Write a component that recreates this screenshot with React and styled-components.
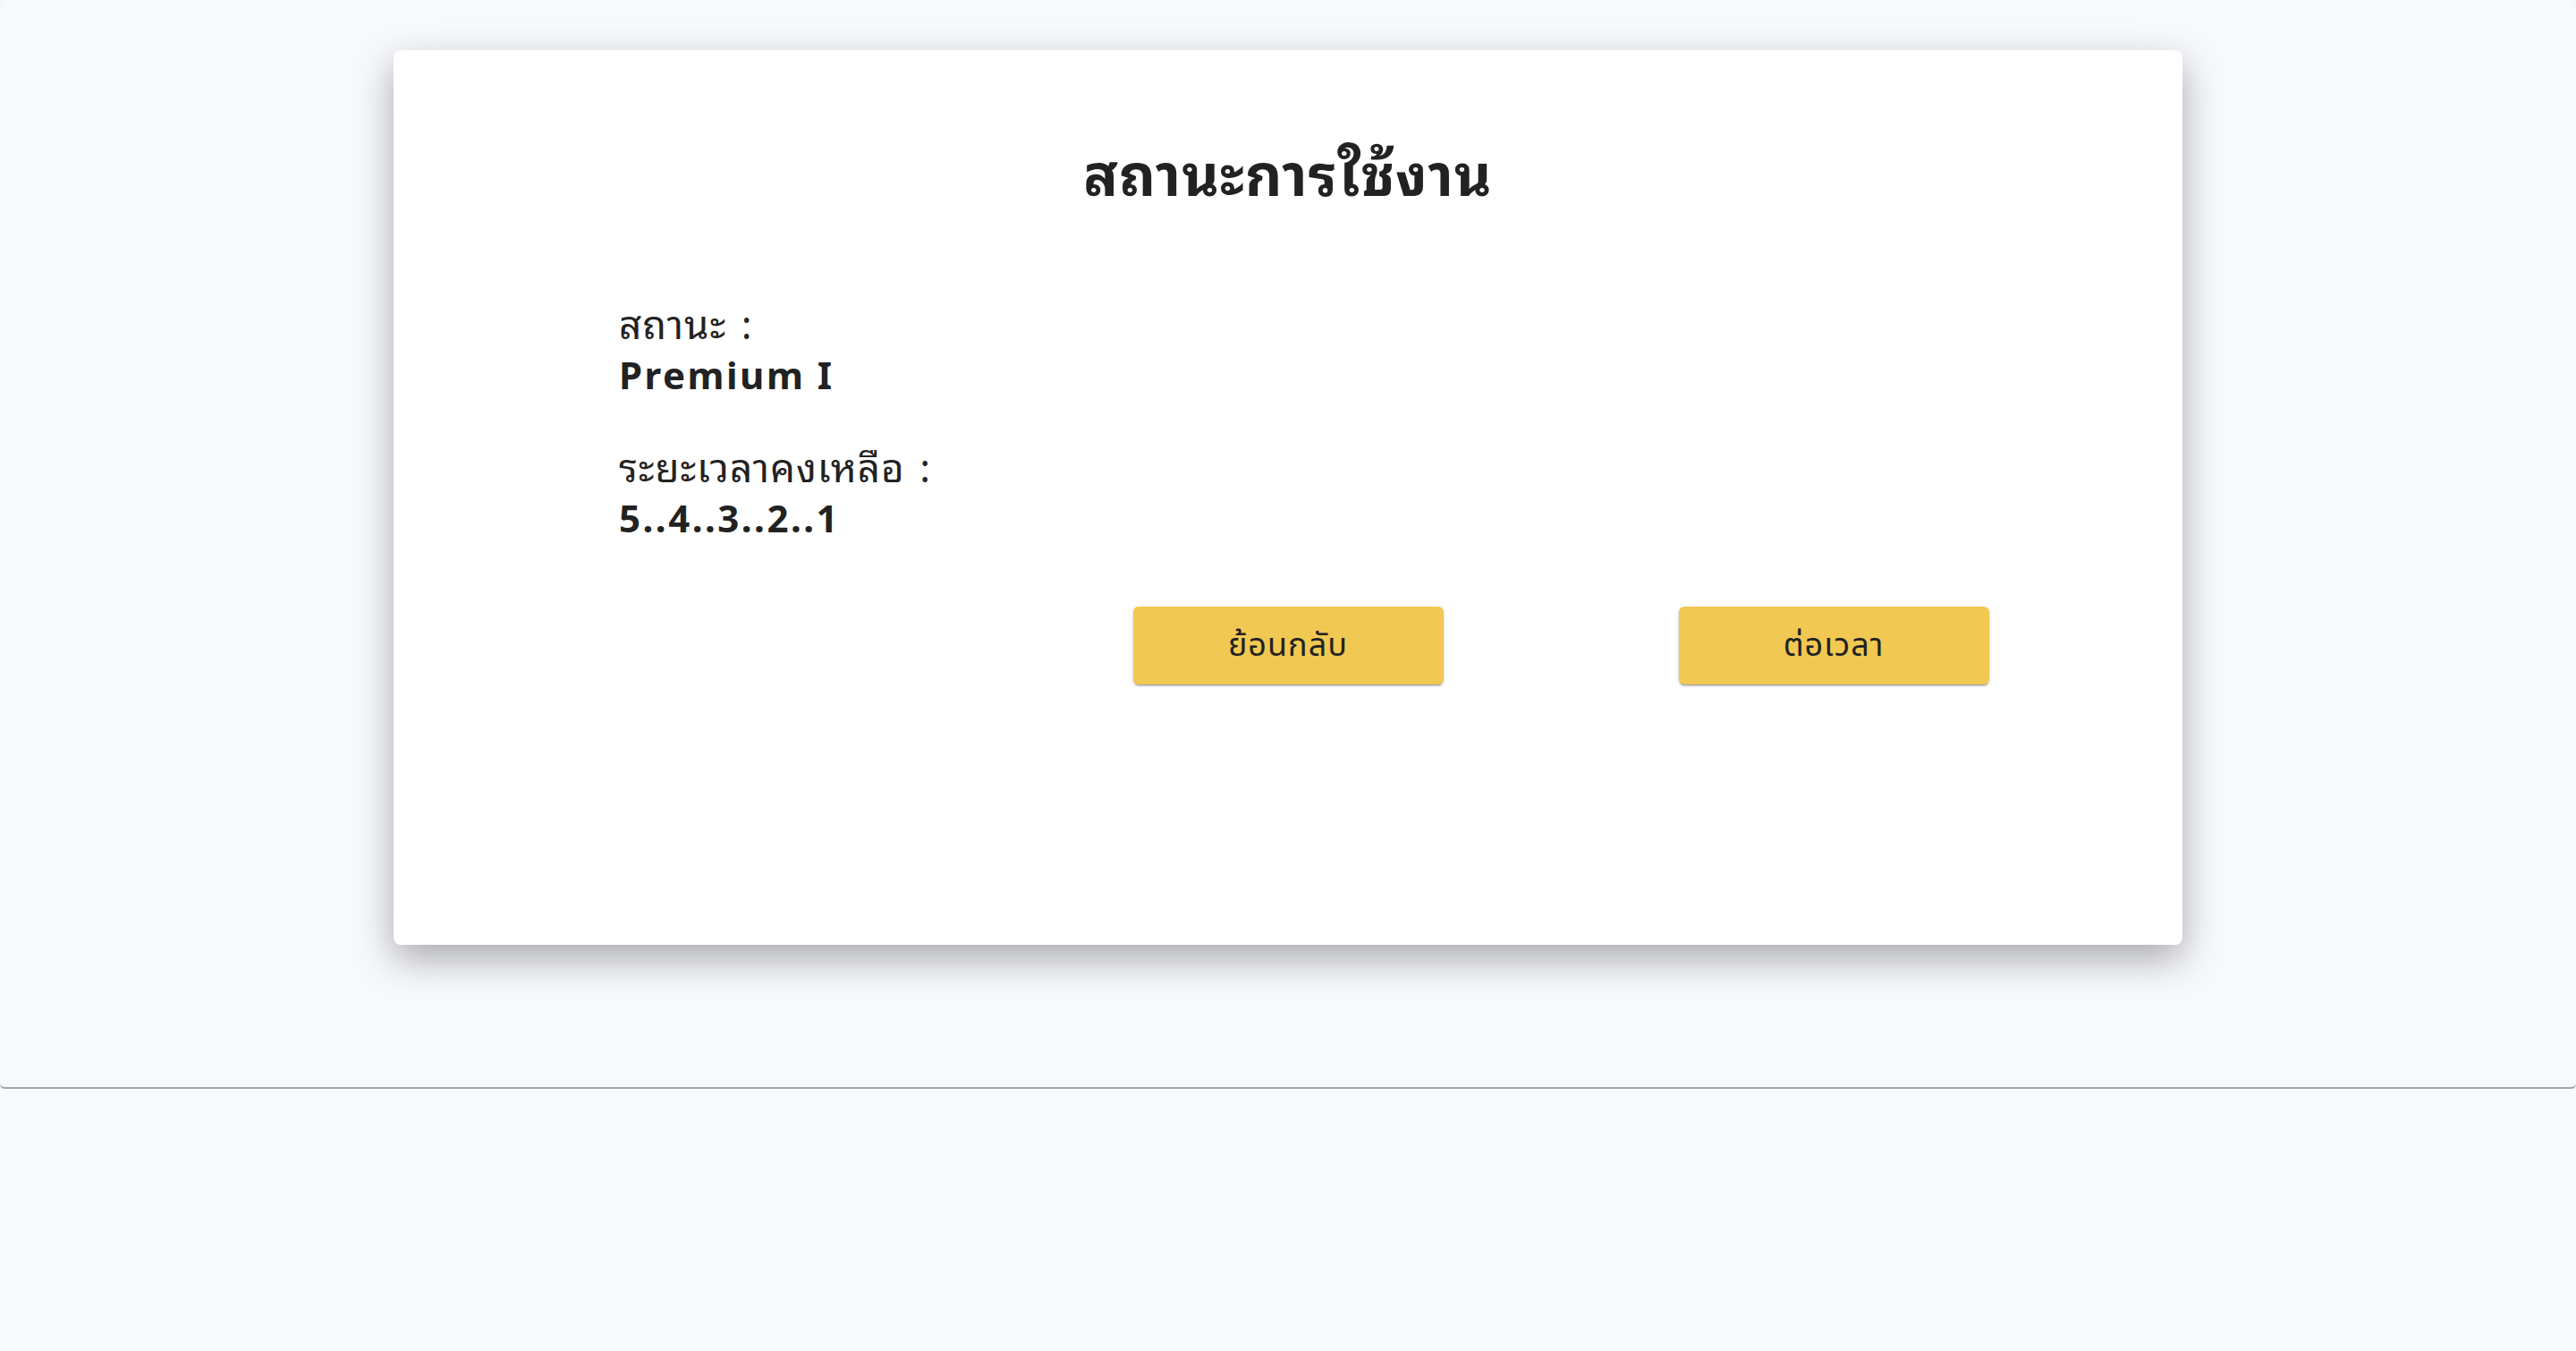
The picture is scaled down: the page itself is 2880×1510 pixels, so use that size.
import React from "react";
import styled, { createGlobalStyle } from "styled-components";

const GlobalStyle = createGlobalStyle`
  html, body {
    margin: 0;
    padding: 0;
    background: #f8f9fd;
    font-family: "Noto Sans", "Noto Sans Thai Looped", "Noto Sans Thai", sans-serif;
    color: #222222;
  }
`;

const Page = styled.div`
  height: 1217px;
  background: #f8f9fd;
  border-radius: 6px;
  border-bottom: 2px solid #a4a5a8;
  box-shadow: 0 1px 3px 0 rgba(0, 0, 0, 0.15);
  padding-top: 56px;
  box-sizing: border-box;
`;

const Card = styled.div`
  width: 2000px;
  height: 1000px;
  margin: 0 auto;
  background: #ffffff;
  border-radius: 8px;
  box-shadow: 0 16px 44px rgba(0, 0, 0, 0.32);
  padding: 0 85px;
  box-sizing: border-box;
  display: flex;
  flex-direction: column;
`;

const Title = styled.h1`
  margin: 0;
  padding-top: 95px;
  text-align: center;
  font-size: 64px;
  font-weight: 700;
  line-height: 88px;
  letter-spacing: 1px;
`;

const Info = styled.div`
  margin: 95px 0 0 167px;
  display: flex;
  flex-direction: column;
`;

const Field = styled.div`
  display: flex;
  flex-direction: column;
  margin-bottom: ${(p) => p.$gap || 0}px;
`;

const Label = styled.span`
  font-size: 44px;
  line-height: 56px;
  letter-spacing: 1px;
  word-spacing: 4px;
`;

const Value = styled.span`
  font-size: 42px;
  font-weight: 700;
  line-height: 58px;
  letter-spacing: 2.5px;
`;

const Actions = styled.div`
  display: grid;
  grid-template-columns: repeat(3, 1fr);
  margin-top: 70px;
`;

const Button = styled.button`
  grid-column: ${(p) => p.$col};
  justify-self: center;
  width: 347px;
  height: 87px;
  border: none;
  border-radius: 6px;
  background: #f1c851;
  color: #222222;
  font-family: "Noto Sans", "Noto Sans Thai", sans-serif;
  font-size: 36px;
  letter-spacing: 1px;
  cursor: pointer;
  box-shadow: 0 3px 1px -2px rgba(0, 0, 0, 0.2), 0 2px 2px 0 rgba(0, 0, 0, 0.14),
    0 1px 5px 0 rgba(0, 0, 0, 0.12);
`;

export default function App() {
  return (
    <>
      <GlobalStyle />
      <Page>
        <Card>
          <Title>สถานะการใช้งาน</Title>
          <Info>
            <Field $gap={46}>
              <Label>สถานะ :</Label>
              <Value>Premium I</Value>
            </Field>
            <Field>
              <Label>ระยะเวลาคงเหลือ :</Label>
              <Value>5..4..3..2..1</Value>
            </Field>
          </Info>
          <Actions>
            <Button $col={2}>ย้อนกลับ</Button>
            <Button $col={3}>ต่อเวลา</Button>
          </Actions>
        </Card>
      </Page>
    </>
  );
}
